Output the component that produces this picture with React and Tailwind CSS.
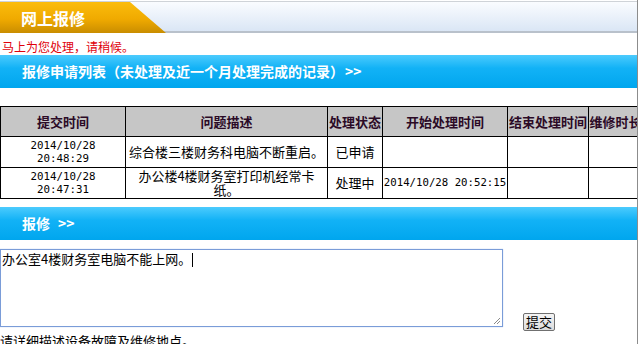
const cjk = '[font-family:"Noto_Sans_CJK_SC",sans-serif]'

const rows = [
  { date: '2014/10/28', time: '20:48:29', desc: '综合楼三楼财务科电脑不断重启。', status: '已申请', start: '', end: '', dur: '' },
  { date: '2014/10/28', time: '20:47:31', desc: '办公楼4楼财务室打印机经常卡纸。', status: '处理中', start: '2014/10/28 20:52:15', end: '', dur: '' },
]

const heads = ['提交时间', '问题描述', '处理状态', '开始处理时间', '结束处理时间', '维修时长']

function BlueBar({ children }) {
  return (
    <div className="h-[33px] flex items-center pl-[22px] bg-[linear-gradient(to_bottom,#4ccbfd,#12b2f6_40%,#00a6ee)] text-white text-[14px] font-bold">
      {children}
    </div>
  )
}

export default function App() {
  return (
    <div className={`w-[639px] h-[344px] overflow-hidden bg-white ${cjk}`}>
      <div className="w-[638px] h-[344px] border-r border-[#8c8c8c] overflow-hidden">
        <div className="mt-px border-t border-[#cfd3d8] h-[32px] flex bg-[linear-gradient(to_bottom,#fafcff,#dae6f5_94%,#b9c1cb_94%)]">
          <div className="w-[166px] h-full flex items-center pl-[21px] bg-[linear-gradient(to_bottom,#fbbc0c,#f0aa00_55%,#c98d00)] [clip-path:polygon(0_0,130px_0,166px_100%,0_100%)] text-white text-[16px] font-bold">
            网上报修
          </div>
        </div>

        <div className="h-[22px] pt-[4px] pl-[2px] text-[12px] leading-[20px] text-[#e0000b]">
          马上为您处理，请稍候。
        </div>

        <BlueBar>报修申请列表（未处理及近一个月处理完成的记录）<span className="ml-[1px]">&gt;&gt;</span></BlueBar>

        <div className="mt-[18px] w-[637px] overflow-hidden">
          <table className="table-fixed border-collapse w-[642px] text-[13px] text-black">
            <colgroup>
              <col className="w-[125px]" />
              <col className="w-[202px]" />
              <col className="w-[55px]" />
              <col className="w-[125px]" />
              <col className="w-[81px]" />
              <col className="w-[54px]" />
            </colgroup>
            <thead>
              <tr className="h-[30px] bg-[#c6c6c6]">
                {heads.map(h => (
                  <th key={h} className="border border-black px-0 font-bold text-[#2b0a26] whitespace-nowrap overflow-hidden">
                    {h}
                  </th>
                ))}
              </tr>
            </thead>
            <tbody>
              {rows.map(r => (
                <tr key={r.time} className="h-[31px]">
                  <td className="border border-black text-center leading-[13px] [font-family:'DejaVu_Sans_Mono',monospace] text-[10.8px]">
                    {r.date}<br />{r.time}
                  </td>
                  <td className="border border-black text-center px-[2px] leading-[14px]">{r.desc}</td>
                  <td className="border border-black text-center">{r.status}</td>
                  <td className="border border-black text-center whitespace-nowrap [font-family:'DejaVu_Sans_Mono',monospace] text-[10.7px]">{r.start}</td>
                  <td className="border border-black">{r.end}</td>
                  <td className="border border-black">{r.dur}</td>
                </tr>
              ))}
            </tbody>
          </table>
        </div>

        <div className="mt-[8px]">
          <BlueBar>报修 <span className="ml-[8px]">&gt;&gt;</span></BlueBar>
        </div>

        <div className="mt-[9px] flex items-end">
          <div className="relative w-[503px] h-[78px] border border-[#7a9cd8] shadow-[0_0_1px_#a9c2ee] px-[1px] pt-[1px] text-[13px] leading-[16px] text-black">
            办公室4楼财务室电脑不能上网。<span className="inline-block align-middle w-px h-[14px] bg-black ml-[1px]" />
            <svg className="absolute right-[1px] bottom-[1px]" width="9" height="9" viewBox="0 0 9 9">
              <path d="M8 2 L2 8 M8 5 L5 8" stroke="#8a8a8a" strokeWidth="1" />
            </svg>
          </div>
          <button className="ml-[20px] mb-[-4px] h-[18px] px-[2px] border border-[#707070] rounded-[2px] bg-[linear-gradient(to_bottom,#f4f4f4,#dcdcdc)] text-[13px] leading-[14px] text-black">
            提交
          </button>
        </div>

        <div className="mt-[6px] text-[13px] leading-[16px] text-black">请详细描述设备故障及维修地点。</div>
      </div>
    </div>
  )
}
